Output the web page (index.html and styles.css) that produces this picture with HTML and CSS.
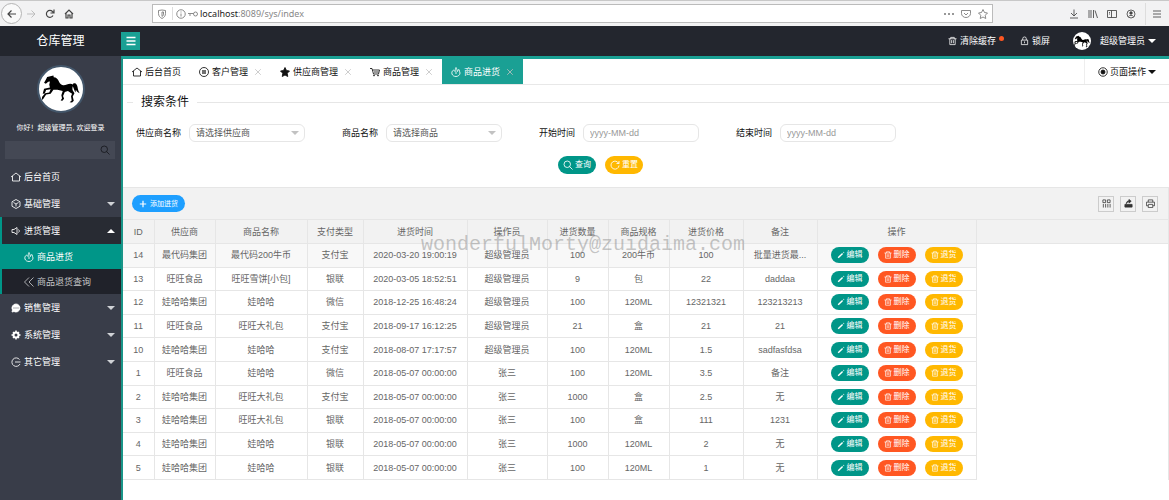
FILE: index.html
```html
<!DOCTYPE html>
<html lang="zh-CN">
<head>
<meta charset="utf-8">
<title>仓库管理</title>
<link rel="stylesheet" href="styles.css">
</head>
<body>
<svg class="sprite" aria-hidden="true">
  <symbol id="home" viewBox="0 0 20 20"><path d="M0 10 10 2l10 8M3 8v10h14V8"/></symbol>
  <symbol id="house" viewBox="0 0 20 20"><path d="M2 10 10 2l8 8M4 9v9h4v-6h4v6h4V9" stroke-width="2.4"/></symbol>
  <symbol id="trash" viewBox="0 0 20 20"><path d="M1 5h18M6 5V2h8v3M4 5v13h12V5M8 8v7M12 8v7"/></symbol>
  <symbol id="pencil" viewBox="0 0 20 20"><path d="M3 17 14 6" stroke-width="3.6"/><path d="M16 4l1-1" stroke-width="4"/></symbol>
  <symbol id="search" viewBox="0 0 20 20"><circle cx="8.500" cy="8.500" r="6.500"/><path d="m13 13 6 6"/></symbol>
  <symbol id="close" viewBox="0 0 20 20"><path d="m3 3 14 14M17 3 3 17"/></symbol>
  <symbol id="fire" viewBox="0 0 20 20"><path d="M5 6C2 8 1 11 2 14c1 3 4 5 8 5s8-3 8-7c0-3-2-4-2-7-2 1-3 2-3 4-1-2-1-5-3-8-2 2-1 6-2 8-1-1-2-2-3-3zM10 9v5"/></symbol>
  <symbol id="horse" viewBox="30 42 110 84"><path d="M63 45l1 5c7 0 12 5 15 12 3 6 6 10 12 11 7 1 13-4 21-4 3 0 5 1 7 2 1-4 8-5 11 0 5 8 2 14 9 25-6-2-9-6-11-10l-1 8c-4-6-5-13-8-18-1 5-2 9 1 14l4 6-5 10 3 12-5 5-7-1 6-5-2-12 3-7-12-8-9 3-5 11 3 8-5 6-5-1 4-6-2-9 4-12-15-4-12 0-8 12-13 2-9 14-7 2 2-6 11-14 12-2 4-9-13 2-4 10-6 1 4-15 17-3-2-8 2-10-5 1-7 6-5-3 5-9 4-8z"/></symbol>
</svg>

<div class="browser">
  <div class="nav-buttons">
    <button class="back" aria-label="后退"><svg class="ic" viewBox="0 0 20 20"><path d="M18 10H3m6-7-7 7 7 7" stroke-width="2.400"/></svg></button>
    <button class="dim" aria-label="前进"><svg class="ic" viewBox="0 0 20 20"><path d="M2 10h15m-6-7 7 7-7 7"/></svg></button>
    <button aria-label="刷新"><svg class="ic" viewBox="0 0 20 20"><path d="M16 13a7 7 0 1 1-1-8l2 2M18 1v7h-7" stroke-width="2.400"/></svg></button>
    <button aria-label="主页"><svg class="ic"><use href="#house"/></svg></button>
  </div>
  <div class="address">
    <svg class="ic" viewBox="0 0 20 20"><path d="M3 3l7-1 7 1v6c0 5-3 8-7 10-4-2-7-5-7-10zM10 6v9c2-1 3-3 3-5V6z"/></svg>
    <i class="rule"></i>
    <svg class="ic" viewBox="0 0 20 20"><circle cx="10" cy="10" r="8.500"/><path d="M10 9v6M10 5v2"/></svg>
    <svg class="ic" viewBox="0 0 20 20"><path d="M0 9h11M2 12h4"/><circle cx="15" cy="10" r="4"/></svg>
    <span class="url"><b>localhost</b>:8089/sys/index</span>
    <svg class="ic" viewBox="0 0 20 20"><path d="M0 10h4M8 10h4M16 10h4" stroke-width="3"/></svg>
    <svg class="ic" viewBox="0 0 20 20"><path d="M1 3h18v6a9 8 0 0 1-18 0zM6 8l4 4 4-4"/></svg>
    <svg class="ic" viewBox="0 0 20 20"><path d="m10 1 3 6 6 1-4.500 4.500 1 6.500-5.500-3-5.500 3 1-6.500L1 8l6-1z"/></svg>
  </div>
  <div class="browser-tools">
    <button aria-label="下载"><svg class="ic" viewBox="0 0 20 20"><path d="M10 1v13m-6-6 6 6 6-6M2 18h16"/></svg></button>
    <button aria-label="书库"><svg class="ic" viewBox="0 0 20 20"><path d="M2 2v16M6 2v16M11 2v16M14 3l5 15"/></svg></button>
    <button aria-label="侧栏"><svg class="ic" viewBox="0 0 20 20"><path d="M1 3h18v14H1zM9 3v14M4 7h2M4 10h2"/></svg></button>
    <button aria-label="账户"><svg class="ic" viewBox="0 0 20 20"><circle cx="10" cy="10" r="8"/><circle cx="10" cy="8" r="2.500" fill="currentColor"/><path d="M5 15c2-3 8-3 10 0"/></svg></button>
    <button class="menu-button" aria-label="菜单"><svg class="ic" viewBox="0 0 20 20"><path d="M2 4h16M2 10h16M2 16h16"/></svg></button>
  </div>
</div>

<header class="header">
  <h1 class="logo">仓库管理</h1>
  <button class="toggle" aria-label="折叠菜单"><svg class="ic" viewBox="0 0 20 20"><path d="M1 3h18M1 10h18M1 17h18" stroke-width="3"/></svg></button>
  <a class="head-link clear" href="#"><svg class="ic"><use href="#trash"/></svg>清除缓存<i class="dot"></i></a>
  <a class="head-link lock" href="#"><svg class="ic" viewBox="0 0 20 20"><path d="M3 8h14v10H3zM6 8V5a4 4 0 0 1 8 0v3M10 11v4"/></svg>锁屏</a>
  <a class="head-link user" href="#"><span class="avatar small"><svg class="horse"><use href="#horse"/></svg></span>超级管理员<i class="caret"></i></a>
</header>

<div class="body">
  <aside class="side">
    <div class="profile">
      <span class="avatar"><svg class="horse"><use href="#horse"/></svg></span>
      <p>你好！超级管理员, 欢迎登录</p>
    </div>
    <div class="side-search"><input type="text" aria-label="搜索菜单"><button aria-label="搜索"><svg class="ic"><use href="#search"/></svg></button></div>
    <nav class="menu">
      <a href="#"><svg class="ic"><use href="#home"/></svg>后台首页</a>
      <a href="#"><svg class="ic" viewBox="0 0 20 20"><path d="m10 1 8 4.500v9L10 19l-8-4.500v-9zM5 7l5 3 5-3M10 10v5"/></svg>基础管理<i class="caret"></i></a>
      <div class="open">
        <a class="parent" href="#"><svg class="ic" viewBox="0 0 20 20"><path d="M2 7h4l6-4v14l-6-4H2zM15 7c2 1 2 5 0 6"/></svg>进货管理<i class="caret up"></i></a>
        <a class="sub current" href="#"><svg class="ic"><use href="#fire"/></svg>商品进货</a>
        <a class="sub" href="#"><svg class="ic" viewBox="0 0 20 20"><path d="m10 1-9 9 9 9M19 1l-9 9 9 9"/></svg>商品退货查询</a>
      </div>
      <a href="#"><svg class="ic" viewBox="0 0 20 20"><path d="M10 2a8 8 0 1 1-4 15l-4 1 1-4A8 8 0 0 1 10 2z" fill="currentColor"/><path d="M5 10h2M9 10h2M13 10h2" class="ink"/></svg>销售管理<i class="caret"></i></a>
      <a href="#"><svg class="ic" viewBox="0 0 20 20"><circle cx="10" cy="10" r="5" stroke-width="4"/><path d="M10 1v4M10 15v4M1 10h4M15 10h4M4 4l3 3M13 13l3 3M16 4l-3 3M7 13l-3 3" stroke-width="3"/></svg>系统管理<i class="caret"></i></a>
      <a href="#"><svg class="ic" viewBox="0 0 20 20"><path d="M17 5a8.500 8.500 0 1 0 1 9M8 10h11"/></svg>其它管理<i class="caret"></i></a>
    </nav>
  </aside>

  <main class="main">
    <div class="tabs">
      <a class="tab" href="#"><svg class="ic"><use href="#home"/></svg>后台首页</a>
      <a class="tab" href="#"><svg class="ic" viewBox="0 0 20 20"><circle cx="10" cy="10" r="9"/><path d="M8 6v8M12 6v8" stroke-width="2.400"/></svg>客户管理<svg class="x"><use href="#close"/></svg></a>
      <a class="tab" href="#"><svg class="ic" viewBox="0 0 20 20"><path d="m10 1 3 6 6 1-4.500 4.500 1 6.500-5.500-3-5.500 3 1-6.500L1 8l6-1z" fill="currentColor"/></svg>供应商管理<svg class="x"><use href="#close"/></svg></a>
      <a class="tab" href="#"><svg class="ic" viewBox="0 0 20 20"><path d="M0 3h4l3 11h10l2-8H5M8 10h9"/><circle cx="8" cy="17" r="1"/><circle cx="16" cy="17" r="1"/></svg>商品管理<svg class="x"><use href="#close"/></svg></a>
      <a class="tab active" href="#"><svg class="ic"><use href="#fire"/></svg>商品进货<svg class="x"><use href="#close"/></svg></a>
      <button class="page-ops"><svg class="ic" viewBox="0 0 20 20"><circle cx="10" cy="10" r="8.500"/><circle cx="10" cy="10" r="4" fill="currentColor"/></svg>页面操作<i class="caret"></i></button>
    </div>

    <form class="search">
      <fieldset>
        <legend>搜索条件</legend>
        <div class="fields">
          <div class="field"><label for="provider">供应商名称</label><span class="select"><select id="provider"><option>请选择供应商</option></select></span></div>
          <div class="field"><label for="goods">商品名称</label><span class="select"><select id="goods"><option>请选择商品</option></select></span></div>
          <div class="field"><label for="start">开始时间</label><input id="start" type="text" placeholder="yyyy-MM-dd"></div>
          <div class="field"><label for="end">结束时间</label><input id="end" type="text" placeholder="yyyy-MM-dd"></div>
        </div>
        <div class="actions">
          <button type="button" class="btn green"><svg class="ic"><use href="#search"/></svg>查询</button>
          <button type="button" class="btn yellow"><svg class="ic" viewBox="0 0 20 20"><path d="M18 11a8 8 0 1 1-3-7l3 3M18 2v5h-5"/></svg>重置</button>
        </div>
      </fieldset>
    </form>

    <section class="grid">
      <div class="toolbar">
        <button class="btn blue"><svg class="ic" viewBox="0 0 20 20"><path d="M10 2v16M2 10h16" stroke-width="3"/></svg>添加进货</button>
        <div class="tools">
          <button class="tool" aria-label="筛选列"><svg class="ic" viewBox="0 0 20 20"><path d="M2 2h6v6H2zM12 2h6v6h-6zM3 11v8M8 11v8M13 11v8M18 11v8"/></svg></button>
          <button class="tool" aria-label="导出"><svg class="ic" viewBox="0 0 20 20"><path d="M2 12h16v6H2z" fill="currentColor"/><path d="M5 11c0-5 3-7 7-7M11 1l5 4-5 4z" fill="currentColor"/></svg></button>
          <button class="tool" aria-label="打印"><svg class="ic" viewBox="0 0 20 20"><path d="M5 7V2h10v5M5 15H1V7h18v8h-4M5 12h10v7H5z"/></svg></button>
        </div>
      </div>
      <table>
        <colgroup><col class="c1"><col class="c2"><col class="c3"><col class="c4"><col class="c5"><col class="c6"><col class="c7"><col class="c7"><col class="c8"><col class="c8"><col class="c9"><col></colgroup>
        <thead><tr><th>ID</th><th>供应商</th><th>商品名称</th><th>支付类型</th><th>进货时间</th><th>操作员</th><th>进货数量</th><th>商品规格</th><th>进货价格</th><th>备注</th><th>操作</th><th class="rest"></th></tr></thead>
        <tbody>
          <tr class="hover"><td>14</td><td>最代码集团</td><td>最代码200牛币</td><td>支付宝</td><td>2020-03-20 19:00:19</td><td>超级管理员</td><td>100</td><td>200牛币</td><td>100</td><td>批量进货最...</td><td><div class="ops"><button class="btn green"><svg class="ic"><use href="#pencil"/></svg>编辑</button><button class="btn red"><svg class="ic"><use href="#trash"/></svg>删除</button><button class="btn yellow"><svg class="ic"><use href="#trash"/></svg>退货</button></div></td><td class="rest"></td></tr>
          <tr><td>13</td><td>旺旺食品</td><td>旺旺雪饼[小包]</td><td>银联</td><td>2020-03-05 18:52:51</td><td>超级管理员</td><td>9</td><td>包</td><td>22</td><td>daddaa</td><td><div class="ops"><button class="btn green"><svg class="ic"><use href="#pencil"/></svg>编辑</button><button class="btn red"><svg class="ic"><use href="#trash"/></svg>删除</button><button class="btn yellow"><svg class="ic"><use href="#trash"/></svg>退货</button></div></td><td class="rest"></td></tr>
          <tr><td>12</td><td>娃哈哈集团</td><td>娃哈哈</td><td>微信</td><td>2018-12-25 16:48:24</td><td>超级管理员</td><td>100</td><td>120ML</td><td>12321321</td><td>123213213</td><td><div class="ops"><button class="btn green"><svg class="ic"><use href="#pencil"/></svg>编辑</button><button class="btn red"><svg class="ic"><use href="#trash"/></svg>删除</button><button class="btn yellow"><svg class="ic"><use href="#trash"/></svg>退货</button></div></td><td class="rest"></td></tr>
          <tr><td>11</td><td>旺旺食品</td><td>旺旺大礼包</td><td>支付宝</td><td>2018-09-17 16:12:25</td><td>超级管理员</td><td>21</td><td>盒</td><td>21</td><td>21</td><td><div class="ops"><button class="btn green"><svg class="ic"><use href="#pencil"/></svg>编辑</button><button class="btn red"><svg class="ic"><use href="#trash"/></svg>删除</button><button class="btn yellow"><svg class="ic"><use href="#trash"/></svg>退货</button></div></td><td class="rest"></td></tr>
          <tr><td>10</td><td>娃哈哈集团</td><td>娃哈哈</td><td>支付宝</td><td>2018-08-07 17:17:57</td><td>超级管理员</td><td>100</td><td>120ML</td><td>1.5</td><td>sadfasfdsa</td><td><div class="ops"><button class="btn green"><svg class="ic"><use href="#pencil"/></svg>编辑</button><button class="btn red"><svg class="ic"><use href="#trash"/></svg>删除</button><button class="btn yellow"><svg class="ic"><use href="#trash"/></svg>退货</button></div></td><td class="rest"></td></tr>
          <tr><td>1</td><td>旺旺食品</td><td>娃哈哈</td><td>微信</td><td>2018-05-07 00:00:00</td><td>张三</td><td>100</td><td>120ML</td><td>3.5</td><td>备注</td><td><div class="ops"><button class="btn green"><svg class="ic"><use href="#pencil"/></svg>编辑</button><button class="btn red"><svg class="ic"><use href="#trash"/></svg>删除</button><button class="btn yellow"><svg class="ic"><use href="#trash"/></svg>退货</button></div></td><td class="rest"></td></tr>
          <tr><td>2</td><td>娃哈哈集团</td><td>旺旺大礼包</td><td>支付宝</td><td>2018-05-07 00:00:00</td><td>张三</td><td>1000</td><td>盒</td><td>2.5</td><td>无</td><td><div class="ops"><button class="btn green"><svg class="ic"><use href="#pencil"/></svg>编辑</button><button class="btn red"><svg class="ic"><use href="#trash"/></svg>删除</button><button class="btn yellow"><svg class="ic"><use href="#trash"/></svg>退货</button></div></td><td class="rest"></td></tr>
          <tr><td>3</td><td>娃哈哈集团</td><td>旺旺大礼包</td><td>银联</td><td>2018-05-07 00:00:00</td><td>张三</td><td>100</td><td>盒</td><td>111</td><td>1231</td><td><div class="ops"><button class="btn green"><svg class="ic"><use href="#pencil"/></svg>编辑</button><button class="btn red"><svg class="ic"><use href="#trash"/></svg>删除</button><button class="btn yellow"><svg class="ic"><use href="#trash"/></svg>退货</button></div></td><td class="rest"></td></tr>
          <tr><td>4</td><td>娃哈哈集团</td><td>娃哈哈</td><td>银联</td><td>2018-05-07 00:00:00</td><td>张三</td><td>1000</td><td>120ML</td><td>2</td><td>无</td><td><div class="ops"><button class="btn green"><svg class="ic"><use href="#pencil"/></svg>编辑</button><button class="btn red"><svg class="ic"><use href="#trash"/></svg>删除</button><button class="btn yellow"><svg class="ic"><use href="#trash"/></svg>退货</button></div></td><td class="rest"></td></tr>
          <tr><td>5</td><td>娃哈哈集团</td><td>娃哈哈</td><td>银联</td><td>2018-05-07 00:00:00</td><td>张三</td><td>100</td><td>120ML</td><td>1</td><td>无</td><td><div class="ops"><button class="btn green"><svg class="ic"><use href="#pencil"/></svg>编辑</button><button class="btn red"><svg class="ic"><use href="#trash"/></svg>删除</button><button class="btn yellow"><svg class="ic"><use href="#trash"/></svg>退货</button></div></td><td class="rest"></td></tr>
        </tbody>
      </table>
    </section>
  </main>
</div>
<div class="watermark">wonderfulMorty@zuidaima.com</div>
</body>
</html>
```
FILE: styles.css
```css
* { box-sizing: border-box; }
body {
  margin: 0;
  min-height: 100vh;
  display: flex;
  flex-direction: column;
  font: 9px/12px "Liberation Sans", "Noto Sans CJK SC", sans-serif;
  color: #222;
  background: #fff;
}
a { color: inherit; text-decoration: none; }
button, input, select { font: inherit; color: inherit; margin: 0; }
button { border: 0; padding: 0; background: none; display: flex; align-items: center; justify-content: center; }
.sprite { position: absolute; width: 0; height: 0; }
.ic { width: 10px; height: 10px; flex: none; fill: none; stroke: currentColor; stroke-width: 1.7; }
.ic .ink { stroke: #393d49; }
.caret { border: 4px solid transparent; border-top-color: currentColor; border-bottom: 0; flex: none; }
.caret.up { border-top: 0; border-bottom: 4px solid currentColor; }

.browser { display: flex; align-items: center; height: 26px; background: #f2f2f3; border-top: 1px solid #c8c8c8; color: #444; }
.nav-buttons { display: flex; align-items: center; gap: 9px; padding-left: 1px; width: 152px; }
.nav-buttons .back { width: 21px; height: 21px; border: 1px solid #b4b4b4; border-radius: 50%; background: #fafafa; margin-right: -5px; }
.nav-buttons .dim { color: #b5b5b5; }
.address { flex: 1; display: flex; align-items: center; height: 19px; padding: 0 2px 0 4px; background: #fff; border: 1px solid #bbb; color: #777; }
.rule { width: 1px; height: 13px; background: #ddd; margin: 0 3px; }
.address .ic { margin-right: 2px; }
.address .ic:nth-last-child(-n+2) { margin-left: 5px; }
.url { flex: 1; font-family: "Noto Sans", sans-serif; color: #888; }
.url b { font-weight: 400; color: #222; }
.browser-tools { display: flex; align-items: center; gap: 9px; width: 176px; justify-content: flex-end; padding-right: 7px; }
.menu-button { border-left: 1px solid #ddd; height: 22px; padding-left: 6px; }

.header { display: flex; align-items: center; height: 30px; background: #23262e; color: #fff; }
.logo { width: 121px; margin: 0; font-size: 12px; font-weight: 400; text-align: center; }
.toggle { width: 19px; height: 18px; background: #1aa094; margin-right: auto; }
.head-link { display: flex; align-items: center; gap: 3px; }
.clear { margin-right: 16px; }
.clear .ic, .lock .ic { width: 9px; }
.dot { width: 5px; height: 5px; border-radius: 50%; background: #ff5722; margin-bottom: 5px; }
.lock { margin-right: 23px; }
.user { padding-right: 13px; }
.avatar { width: 48px; height: 48px; border-radius: 50%; background: #fff; border: 2px solid #44576b; display: flex; align-items: center; justify-content: center; }
.avatar.small { width: 18px; height: 18px; border: 0; margin-right: 6px; }
.horse { width: 38px; height: 30px; fill: #000; }
.small .horse { width: 16px; height: 13px; }

.body { flex: 1; display: flex; }
.side { width: 121px; flex: none; background: #393d49; color: #fff; }
.profile { display: flex; flex-direction: column; align-items: center; padding-top: 9px; }
.profile p { margin: 9px 0 7px; font-size: 7px; line-height: 12px; }
.side-search { display: flex; margin: 0 6px 4px 5px; height: 18px; background: #444854; }
.side-search input { flex: 1; min-width: 0; border: 0; background: none; padding: 0 5px; }
.side-search button { width: 20px; color: #16181d; }
.menu a { display: flex; align-items: center; gap: 3px; height: 27px; padding: 0 6px 0 11px; }
.menu .caret { margin-left: auto; color: #d0d2d6; }
.menu .open { border-left: 2px solid #009688; background: #20222a; }
.menu .open .parent { padding-left: 9px; background: #282b33; }
.menu .open .caret { color: #fff; }
.menu .open .sub { height: 25px; padding-left: 22px; color: #c4c5c7; }
.menu .open .current { background: #009688; color: #fff; }

.main { flex: 1; min-width: 0; border-top: 3px solid #1aa094; border-left: 2px solid #1a9588; }
.tabs { display: flex; height: 26px; border-bottom: 1px solid #e8e8e8; }
.tab { display: flex; align-items: center; gap: 3px; padding: 0 9px; color: #111; }
.tab .x { width: 8px; height: 8px; margin-left: 3px; stroke: #c2c2c2; stroke-width: 2; }
.tab.active { background: #1aa094; color: #fff; }
.page-ops { margin-left: auto; gap: 2px; padding: 0 13px; border-left: 1px solid #eee; color: #111; }

.search fieldset { margin: 8px 0 0 4px; padding: 0 0 13px; border: 0; border-top: 1px solid #e6e6e6; min-width: 0; }
.search legend { margin-left: 6px; padding: 0 8px; font-size: 12px; line-height: 18px; color: #111; }
.fields { display: flex; flex-wrap: wrap; gap: 12px 19px; padding-top: 13px; }
.field { display: flex; align-items: center; gap: 8px; color: #111; }
.field label { width: 54px; text-align: right; white-space: nowrap; }
.field input, .field select { width: 116px; height: 18px; padding: 0 6px; border: 1px solid #e6e6e6; border-radius: 6px; background: #fff; color: #555; appearance: none; }
.field input::placeholder { color: #999; }
.select { position: relative; display: flex; }
.select::after { content: ""; position: absolute; right: 6px; top: 7px; border: 4px solid transparent; border-top-color: #c2c2c2; border-bottom: 0; pointer-events: none; }
.actions { display: flex; justify-content: center; gap: 9px; padding: 14px 95px 0 0; }

.btn { height: 16px; width: 38px; gap: 2px; border-radius: 9px; color: #fff; font-size: 8px; line-height: 12px; }
.btn .ic { width: 8px; height: 8px; }
.actions .btn { height: 18px; }
.actions .ic { width: 10px; height: 10px; }
.green { background: #009688; }
.yellow { background: #ffb800; }
.red { background: #ff5722; }
.blue { background: #1e9fff; width: 53px; height: 17px; gap: 3px; font-size: 7px; }

.grid { border: 1px solid #e6e6e6; border-left: 0; border-bottom: 0; }
.toolbar { display: flex; align-items: center; justify-content: space-between; height: 31px; padding: 0 10px 0 9px; background: #f2f2f2; }
.tools { display: flex; gap: 6px; }
.tool { width: 16px; height: 16px; border: 1px solid #ccc; color: #333; }
.tool .ic { width: 9px; height: 9px; }
table { width: 100%; height: 261px; table-layout: fixed; border-collapse: collapse; color: #666; }
th, td { padding: 0; font-weight: 400; text-align: center; white-space: nowrap; overflow: hidden; border: 1px solid #e6e6e6; border-left: 0; height: 23px; }
th { height: 24px; background: #f2f2f2; }
.hover td { background: #f8f8f8; }
th.rest { border-right: 0; }
td.rest { border: 0; background: none; }
.ops { display: flex; justify-content: center; gap: 9px; }
.c1 { width: 31px; } .c2 { width: 61px; } .c3 { width: 92px; } .c4 { width: 56px; } .c5 { width: 104px; }
.c6 { width: 80px; } .c7 { width: 61px; } .c8 { width: 74px; } .c9 { width: 159px; }
.watermark { position: absolute; left: 421px; top: 233px; font: 20px/24px "Liberation Mono", monospace; color: rgba(130, 130, 130, .45); pointer-events: none; }
```
